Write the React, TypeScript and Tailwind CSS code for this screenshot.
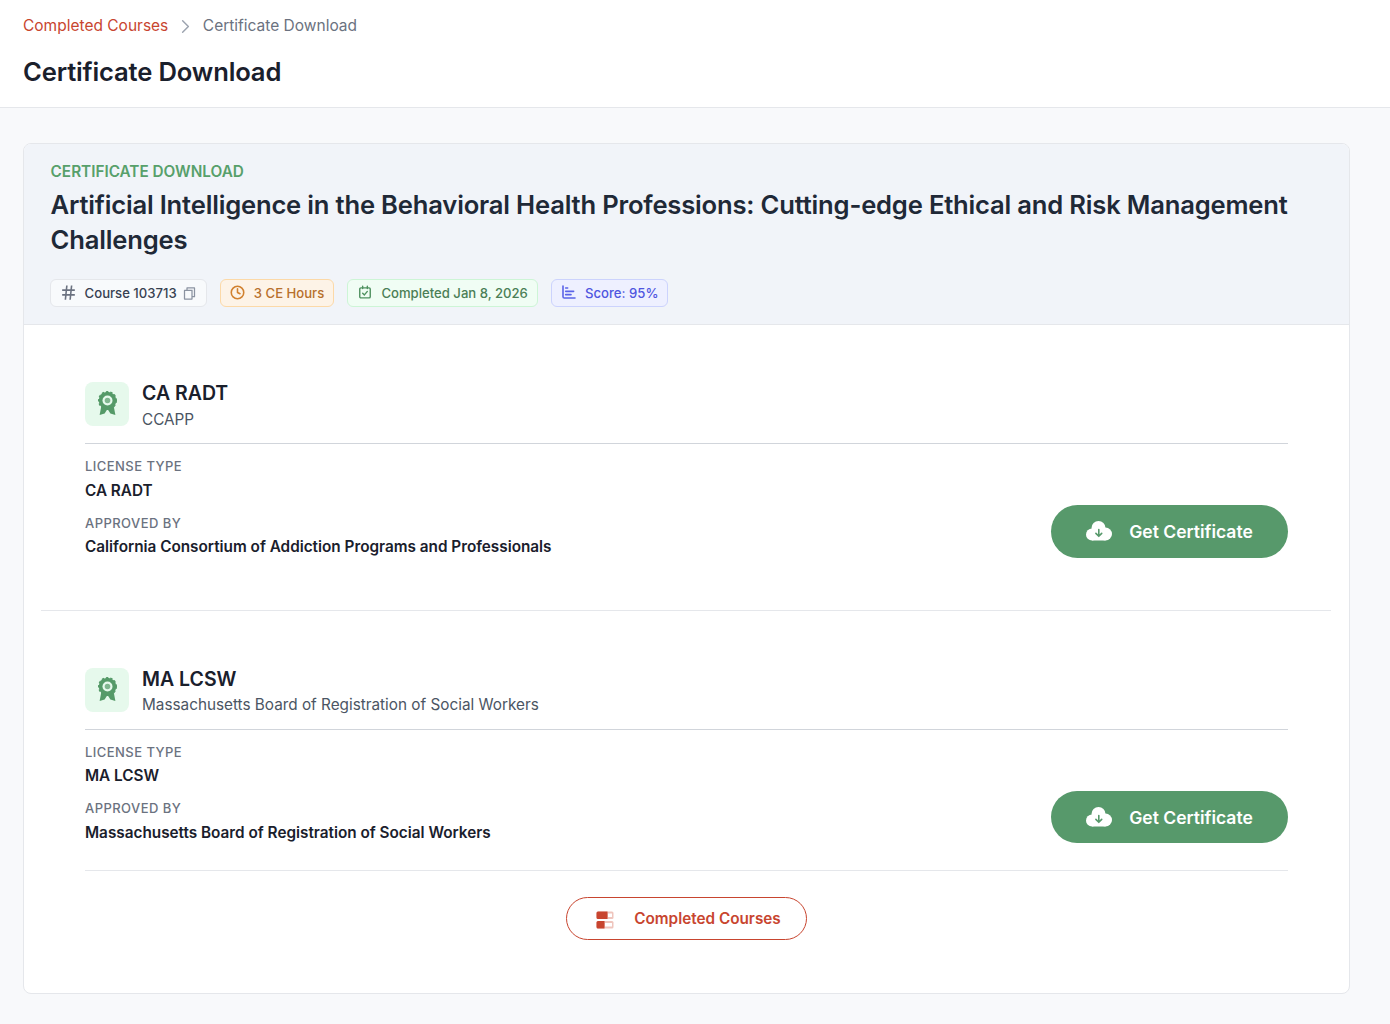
import { ReactNode } from "react";
import { RiFileCopyLine, RiHashtag } from "react-icons/ri";
import { ChartBar, ChevronRight, Clock } from "lucide-react";

interface Certificate {
  title: string;
  board: string;
  licenseType: string;
  approvedBy: string;
}

const certificates: Certificate[] = [
  {
    title: "CA RADT",
    board: "CCAPP",
    licenseType: "CA RADT",
    approvedBy: "California Consortium of Addiction Programs and Professionals",
  },
  {
    title: "MA LCSW",
    board: "Massachusetts Board of Registration of Social Workers",
    licenseType: "MA LCSW",
    approvedBy: "Massachusetts Board of Registration of Social Workers",
  },
];

function Tag({ icon, className, children }: { icon: ReactNode; className: string; children: ReactNode }) {
  return (
    <span className={`flex h-[28px] items-center rounded-md border px-[9px] text-[13.12px] font-medium ${className}`}>
      <span className="mr-[8px] mb-[2px] flex size-[16px] shrink-0 items-center justify-center">{icon}</span>
      <span className="flex items-center pt-[2px]">{children}</span>
    </span>
  );
}

// rosette with a scalloped edge, a ring in the middle and two ribbons
function AwardIcon() {
  return (
    <svg width="21" height="25" viewBox="0 0 21 25" className="mt-[-1px]">
      <path d="M4.5 14 L2.6 24 L7.6 22.6 L10.5 18 Z" fill="#559a68" />
      <path d="M16.5 14 L18.4 24 L13.4 22.6 L10.5 18 Z" fill="#559a68" />
      <circle cx="10.5" cy="9.5" r="8.8" fill="#559a68" stroke="#559a68" strokeWidth="1.4" strokeDasharray="2.4 2" />
      <circle cx="10.5" cy="9.5" r="5" fill="#e6f9ec" />
      <circle cx="10.5" cy="9.5" r="2.8" fill="#7fb58e" />
    </svg>
  );
}

function CalendarIcon() {
  return (
    <svg width="14" height="14" viewBox="0 0 24 24" fill="none" stroke="#4f9160" strokeWidth="2.4" strokeLinecap="round" strokeLinejoin="round">
      <rect x="3" y="5" width="18" height="17" rx="2" />
      <path d="M8 2v4M16 2v4M8 14l3 3 5-6" />
    </svg>
  );
}

// three-lobed cloud with a small arrow in it
function CloudDownloadIcon() {
  return (
    <svg width="26" height="20" viewBox="0 0 26 20">
      <circle cx="12.5" cy="7" r="7" fill="#fff" />
      <circle cx="6" cy="13.5" r="6" fill="#fff" />
      <circle cx="19.5" cy="13" r="6.5" fill="#fff" />
      <rect x="6" y="11" width="13.5" height="8.5" fill="#fff" />
      <path d="M12.8 8.5v6.5M9.9 12.4l2.9 2.9 2.9-2.9" fill="none" stroke="#57996b" strokeWidth="1.6" strokeLinecap="round" strokeLinejoin="round" />
    </svg>
  );
}

function SwitchesIcon() {
  return (
    <svg width="18" height="18" viewBox="0 0 18 18">
      <rect x="0.5" y="0.5" width="17" height="7.5" rx="1.5" fill="#efc5bd" />
      <rect x="12" y="2.5" width="4" height="3.5" fill="#fff" />
      <path d="M2 0.5h9.5V8H2a1.5 1.5 0 0 1-1.5-1.5v-4.5A1.5 1.5 0 0 1 2 0.5z" fill="#c8452f" />
      <rect x="0.5" y="10" width="17" height="7.5" rx="1.5" fill="#efc5bd" />
      <rect x="9" y="12" width="7" height="3.5" fill="#fff" />
      <path d="M2 10h6.5v7.5H2a1.5 1.5 0 0 1-1.5-1.5v-4.5A1.5 1.5 0 0 1 2 10z" fill="#c8452f" />
    </svg>
  );
}

function CertificateRow({ cert, last }: { cert: Certificate; last: boolean }) {
  return (
    <section className={last ? "pt-[56px] pr-[43px] pl-[44px]" : "border-b border-[#e5e7eb] pt-[56px] pr-[43px] pb-[52px] pl-[44px]"}>
      <div className="flex items-start gap-[13px] border-b border-[#d1d5db] pb-[12.5px]">
        <div className="mt-[1px] flex size-[44px] items-center justify-center rounded-lg bg-[#e6f9ec]">
          <AwardIcon />
        </div>
        <div>
          <h3 className="text-[19.5px] leading-[24px] font-semibold text-[#1a202c]">{cert.title}</h3>
          <p className="mt-[3.5px] text-[15.3px] leading-[22px] text-[#4b5563]">{cert.board}</p>
        </div>
      </div>
      <div className={`flex items-end justify-between ${last ? "border-b border-[#e5e7eb] pb-[27px]" : ""}`}>
        <dl className="pt-[13px]">
          <dt className="text-[13px] leading-[18px] font-medium tracking-[0.45px] text-[#6b7280]">LICENSE TYPE</dt>
          <dd className="mt-[4.5px] text-[15.3px] leading-[22px] font-semibold text-[#1a202c]">{cert.licenseType}</dd>
          <dt className="mt-[12.2px] text-[13px] leading-[18px] font-medium tracking-[0.45px] text-[#6b7280]">APPROVED BY</dt>
          <dd className="mt-[4.3px] text-[15.3px] leading-[21.6px] font-semibold text-[#1a202c]">{cert.approvedBy}</dd>
        </dl>
        <button className="flex h-[52.6px] w-[237px] items-center justify-center gap-[17px] rounded-full bg-[#57996b] text-[17.5px] font-semibold text-white">
          <CloudDownloadIcon />
          <span className="pt-[1.6px]">Get Certificate</span>
        </button>
      </div>
    </section>
  );
}

export default function App() {
  return (
    <div className="min-h-[1024px] bg-[#f8f9fb] font-['Inter',sans-serif]">
      <header className="h-[108px] border-b border-[#e5e7eb] bg-white px-[23px] pt-[15px]">
        <nav className="flex h-[22px] items-center text-[15.5px]">
          <span className="text-[#c8452f]">Completed Courses</span>
          <ChevronRight className="mr-[5.5px] ml-[6px] size-[23px] text-[#9ca3af]" strokeWidth={1.5} />
          <span className="text-[#6b7280]">Certificate Download</span>
        </nav>
        <h1 className="mt-[15px] text-[25.6px] leading-[40px] font-semibold tracking-[-0.16px] text-[#1a202c]">
          Certificate Download
        </h1>
      </header>

      <main className="pt-[35px] pr-[40px] pb-[30px] pl-[23px]">
        <div className="overflow-hidden rounded-lg border border-[#e5e7eb] bg-white">
          <div className="h-[181px] border-b border-[#e5e7eb] bg-[#f1f4f9] px-[26.6px] pt-[17px]">
            <div className="text-[15.3px] leading-[22px] font-semibold text-[#57a06b]">CERTIFICATE DOWNLOAD</div>
            <h2 className="mt-[4px] text-[25.6px] leading-[35px] font-semibold tracking-[-0.19px] text-[#1f2937]">
              Artificial Intelligence in the Behavioral Health Professions: Cutting-edge Ethical and Risk Management
              Challenges
            </h2>
            <div className="mt-[22px] ml-[-0.6px] flex gap-[13.2px]">
              <Tag icon={<RiHashtag className="size-[19px] shrink-0 text-[#6b7280]" />} className="border-[#e5e7eb] bg-[#f8fafc] text-[#374151]">
                <span className="ml-[0.6px]">Course 103713</span>
                <RiFileCopyLine className="mt-[-2px] ml-[5px] size-[15px] text-[#8b93a1]" />
              </Tag>
              <Tag icon={<Clock className="size-[15px] text-[#d1812f]" strokeWidth={2.5} />} className="border-[#fcd9a8] bg-[#fdf3e7] text-[#b7702c]">
                3 CE Hours
              </Tag>
              <Tag icon={<CalendarIcon />} className="border-[#cdf5d6] bg-[#f0fdf4] text-[#4a7f56]">
                Completed Jan 8, 2026
              </Tag>
              <Tag icon={<ChartBar className="size-[16px] text-[#5a63e8]" strokeWidth={2.4} />} className="border-[#ccd3fd] bg-[#eef0ff] text-[#4f56e0]">
                Score: 95%
              </Tag>
            </div>
          </div>

          <div className="pr-[18px] pl-[17px]">
            {certificates.map((cert, i) => (
              <CertificateRow key={cert.title} cert={cert} last={i === certificates.length - 1} />
            ))}
            <div className="flex justify-center pt-[26px] pb-[53px]">
              <button className="flex h-[43px] w-[241px] items-center justify-center gap-[20px] rounded-full border border-[#c8452f] pt-[2px] pl-[5px] text-[15.3px] font-semibold text-[#c8452f]">
                <SwitchesIcon />
                Completed Courses
              </button>
            </div>
          </div>
        </div>
      </main>
    </div>
  );
}
